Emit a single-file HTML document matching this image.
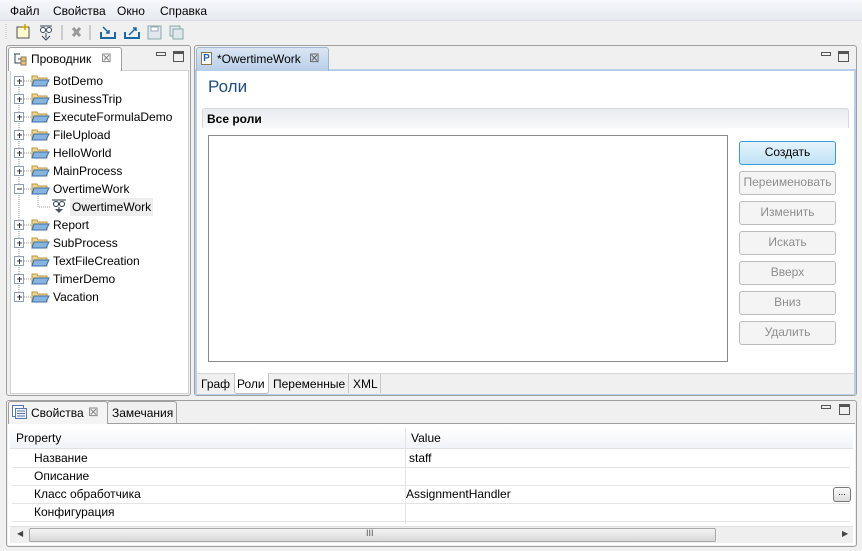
<!DOCTYPE html>
<html><head><meta charset="utf-8"><style>
*{margin:0;padding:0;box-sizing:border-box}
body{width:862px;height:551px;background:#f0f0f0;font:12px "Liberation Sans","DejaVu Sans",sans-serif;color:#000;position:relative;overflow:hidden}
.a{position:absolute}
.menu{left:0;top:0;width:862px;height:21px;background:linear-gradient(#f6f8fb,#e6eaf0);border-bottom:1px solid #d8dde5}
.menu span{position:absolute;top:4px}
.tb{top:22px;left:0;width:862px;height:20px}
.panel{background:#fff;border:1px solid #a0a0a0;border-radius:3px}
.tab{background:#f0f0f0;border:1px solid #a0a0a0;border-bottom:none;height:24px;border-radius:3px 3px 0 0}
.row{position:absolute;left:0;height:18px;line-height:18px;white-space:nowrap}
.btn{position:absolute;left:739px;width:97px;height:24px;border:1px solid #bcbcbc;border-radius:3px;background:#f4f4f4;color:#8d8d8d;text-align:center;line-height:21px}
.mm{position:absolute;width:10px;height:4px;border:1px solid #555}
.mx{position:absolute;width:11px;height:11px;border:1px solid #555;border-top-width:3px}
.prow{position:absolute;left:12px;width:838px;height:18px;border-bottom:1px solid #e4e4e4;line-height:17px}
</style></head><body>
<div class="a menu"><span style="left:10px">Файл</span><span style="left:53px">Свойства</span><span style="left:117px">Окно</span><span style="left:160px">Справка</span></div>
<div class="a tb">
<svg width="200" height="20" style="position:absolute;left:0;top:0">
<g stroke="#bbb"><line x1="6" y1="2" x2="6" y2="18" stroke-dasharray="1,1"/></g>
<rect x="17" y="5" width="12" height="11" fill="#fff8d0" stroke="#555"/><path d="M25 2v6M22 5h6" stroke="#c8a000" stroke-width="1.5"/>
<circle cx="43" cy="8" r="2.5" fill="#fff" stroke="#345"/><circle cx="49" cy="8" r="2.5" fill="#fff" stroke="#345"/><path d="M40 4h12M46 11v5M42 14l4 4 4-4" stroke="#345" fill="none"/>
<line x1="62" y1="3" x2="62" y2="18" stroke="#aaa"/>
<path d="M73 6l7 8M80 6l-7 8" stroke="#999" stroke-width="3"/>
<line x1="90" y1="3" x2="90" y2="18" stroke="#aaa"/>
<path d="M101 10v6h14v-6" stroke="#1a6aa8" stroke-width="2" fill="none"/><path d="M103 5l6 6M109 8v3h-3" stroke="#1a6aa8" stroke-width="1.5" fill="none"/>
<path d="M125 10v6h14v-6" stroke="#1a6aa8" stroke-width="2" fill="none"/><path d="M129 13l7-7M136 9v-3h-3" stroke="#1a6aa8" stroke-width="1.5" fill="none"/>
<rect x="148" y="4" width="13" height="13" fill="#dfe7ef" stroke="#8aa"/><rect x="151" y="5" width="7" height="4" fill="#fff" stroke="#9ab"/>
<rect x="170" y="4" width="10" height="10" fill="#dfe7ef" stroke="#8aa"/><rect x="173" y="7" width="10" height="10" fill="#dfe7ef" stroke="#8aa"/>
</svg></div>

<div class="a panel" style="left:6px;top:45px;width:185px;height:351px;background:#f0f0f0"></div>
<div class="a" style="left:10px;top:70px;width:179px;height:324px;background:#fff;border:1px solid #d0d0d0"></div>
<div class="a tab" style="left:8px;top:47px;width:114px;background:#fff"></div>
<svg class="a" style="left:13px;top:52px" width="16" height="14"><path d="M1 2h6M2 2v9h5M5 7h3M5 11h3" stroke="#345" fill="none"/><rect x="8" y="5" width="5" height="4" fill="#e9c46a" stroke="#876"/><rect x="8" y="9" width="5" height="4" fill="#e9c46a" stroke="#876"/></svg>
<div class="a" style="left:31px;top:52px">Проводник</div>
<div class="a" style="left:101px;top:50px;color:#888;font-size:13px">⊠</div>
<div class="mm" style="left:156px;top:52px"></div><div class="mx" style="left:173px;top:51px"></div>

<div class="row" style="top:72px;left:53px">BotDemo</div>
<div class="row" style="top:90px;left:53px">BusinessTrip</div>
<div class="row" style="top:108px;left:53px">ExecuteFormulaDemo</div>
<div class="row" style="top:126px;left:53px">FileUpload</div>
<div class="row" style="top:144px;left:53px">HelloWorld</div>
<div class="row" style="top:162px;left:53px">MainProcess</div>
<div class="row" style="top:180px;left:53px">OvertimeWork</div>
<div class="row" style="top:198px;left:70px;background:#eee;padding:0 2px">OwertimeWork</div>
<div class="row" style="top:216px;left:53px">Report</div>
<div class="row" style="top:234px;left:53px">SubProcess</div>
<div class="row" style="top:252px;left:53px">TextFileCreation</div>
<div class="row" style="top:270px;left:53px">TimerDemo</div>
<div class="row" style="top:288px;left:53px">Vacation</div>
<svg class="a" style="left:14px;top:72px" width="40" height="234">
<path d="M5 9V225" stroke="#999" stroke-dasharray="1,1" fill="none"/>
<g stroke="#999" stroke-dasharray="1,1" fill="none">
<path d="M10 9h8M10 27h8M10 45h8M10 63h8M10 81h8M10 99h8M10 117h8M10 153h8M10 171h8M10 189h8M10 207h8M10 225h8"/>
<path d="M24 122v13h13"/>
</g>
<g fill="#fff" stroke="#8f9fb8">
<rect x="0.5" y="4.5" width="9" height="9"/><rect x="0.5" y="22.5" width="9" height="9"/><rect x="0.5" y="40.5" width="9" height="9"/><rect x="0.5" y="58.5" width="9" height="9"/><rect x="0.5" y="76.5" width="9" height="9"/><rect x="0.5" y="94.5" width="9" height="9"/><rect x="0.5" y="112.5" width="9" height="9"/><rect x="0.5" y="148.5" width="9" height="9"/><rect x="0.5" y="166.5" width="9" height="9"/><rect x="0.5" y="184.5" width="9" height="9"/><rect x="0.5" y="202.5" width="9" height="9"/><rect x="0.5" y="220.5" width="9" height="9"/>
</g>
<g stroke="#333"><path d="M3 9h5M3 27h5M3 45h5M3 63h5M3 81h5M3 99h5M3 117h5M3 153h5M3 171h5M3 189h5M3 207h5M3 225h5"/>
<path d="M5.5 7v5M5.5 25v5M5.5 43v5M5.5 61v5M5.5 79v5M5.5 97v5M5.5 151v5M5.5 169v5M5.5 187v5M5.5 205v5M5.5 223v5"/></g>
<g fill="#f2d68a" stroke="#b8964a">
<path d="M18 4h5l1 2h9v8h-15z"/><path d="M18 22h5l1 2h9v8h-15z"/><path d="M18 40h5l1 2h9v8h-15z"/><path d="M18 58h5l1 2h9v8h-15z"/><path d="M18 76h5l1 2h9v8h-15z"/><path d="M18 94h5l1 2h9v8h-15z"/><path d="M18 112h5l1 2h9v8h-15z"/><path d="M18 148h5l1 2h9v8h-15z"/><path d="M18 166h5l1 2h9v8h-15z"/><path d="M18 184h5l1 2h9v8h-15z"/><path d="M18 202h5l1 2h9v8h-15z"/><path d="M18 220h5l1 2h9v8h-15z"/>
</g>
<g fill="#8ab4e0" stroke="#3b6ea8">
<path d="M20 8h15l-3 6h-14z"/><path d="M20 26h15l-3 6h-14z"/><path d="M20 44h15l-3 6h-14z"/><path d="M20 62h15l-3 6h-14z"/><path d="M20 80h15l-3 6h-14z"/><path d="M20 98h15l-3 6h-14z"/><path d="M20 116h15l-3 6h-14z"/><path d="M20 152h15l-3 6h-14z"/><path d="M20 170h15l-3 6h-14z"/><path d="M20 188h15l-3 6h-14z"/><path d="M20 206h15l-3 6h-14z"/><path d="M20 224h15l-3 6h-14z"/>
</g>
</svg>
<svg class="a" style="left:51px;top:198px" width="16" height="16"><circle cx="5" cy="6" r="2.5" fill="#fff" stroke="#234"/><circle cx="11" cy="6" r="2.5" fill="#fff" stroke="#234"/><path d="M1 2h14M8 9v3" stroke="#234"/><path d="M4 11l4 4 4-4z" fill="#456"/></svg>

<div class="a" style="left:194px;top:45px;width:663px;height:351px;border:1px solid #a0a0a0;border-radius:3px;background:#f0f0f0"></div>
<div class="a" style="left:195px;top:69px;width:661px;height:326px;border:2px solid #b7cfe8;background:#fff"></div>
<div class="a tab" style="left:196px;top:47px;width:133px;height:24px;background:linear-gradient(#dbe6f3,#b8cfe8);border-color:#9fb6d0"></div>
<div class="a" style="left:201px;top:52px;width:11px;height:13px;border:1px solid #8a7a50;background:#fff;color:#2060b0;font-size:10px;font-weight:bold;line-height:11px;text-align:center">P</div>
<div class="a" style="left:217px;top:52px">*OwertimeWork</div>
<div class="a" style="left:309px;top:50px;color:#666;font-size:13px">⊠</div>
<div class="mm" style="left:821px;top:52px"></div><div class="mx" style="left:838px;top:51px"></div>
<div class="a" style="left:208px;top:77px;font-size:17px;color:#1f4e79">Роли</div>
<div class="a" style="left:202px;top:108px;width:647px;height:20px;border:1px solid #d4d8dc;border-bottom:none;border-radius:3px 3px 0 0;background:linear-gradient(#e8ebee,#f8f9fa);font-weight:bold;padding:3px 0 0 4px">Все роли</div>
<div class="a" style="left:208px;top:135px;width:520px;height:227px;border:1px solid #8a8a8a;background:#fff"></div>
<div class="btn" style="top:141px;border-color:#3c9ad8;background:linear-gradient(#e6f4fc,#bfe2f6);color:#000">Создать</div>
<div class="btn" style="top:171px">Переименовать</div>
<div class="btn" style="top:201px">Изменить</div>
<div class="btn" style="top:231px">Искать</div>
<div class="btn" style="top:261px">Вверх</div>
<div class="btn" style="top:291px">Вниз</div>
<div class="btn" style="top:321px">Удалить</div>
<div class="a" style="left:197px;top:373px;width:657px;height:21px;background:#f0f0f0;border-top:1px solid #d8d8d8"></div>
<div class="a" style="left:197px;top:374px;width:184px;height:19px;border-right:1px solid #c8c8c8"></div>
<div class="a" style="left:201px;top:377px">Граф</div>
<div class="a" style="left:234px;top:373px;width:35px;height:21px;background:#fff;border:1px solid #c0c0c0;border-top:none;border-radius:0 0 3px 3px"></div>
<div class="a" style="left:237px;top:377px">Роли</div>
<div class="a" style="left:269px;top:374px;width:80px;height:19px;border-right:1px solid #c8c8c8"></div>
<div class="a" style="left:273px;top:377px">Переменные</div>
<div class="a" style="left:353px;top:377px">XML</div>

<div class="a" style="left:6px;top:400px;width:851px;height:147px;border:1px solid #a0a0a0;border-radius:3px;background:#f0f0f0"></div>
<div class="a" style="left:8px;top:423px;width:847px;height:122px;background:#fff;border-top:1px solid #a0a0a0"></div>
<div class="a tab" style="left:8px;top:401px;width:100px;height:23px;background:#f4f4f4"></div>
<div class="a tab" style="left:107px;top:401px;width:70px;height:22px"></div>
<svg class="a" style="left:12px;top:405px" width="16" height="14"><rect x="0.5" y="0.5" width="11" height="11" fill="#fff" stroke="#5577aa"/><rect x="3.5" y="3.5" width="11" height="10" fill="#eef3fa" stroke="#5577aa"/><path d="M5 6h8M5 8.5h8M5 11h8" stroke="#5577aa"/></svg>
<div class="a" style="left:31px;top:406px">Свойства</div>
<div class="a" style="left:88px;top:404px;color:#888;font-size:13px">⊠</div>
<div class="a" style="left:112px;top:406px">Замечания</div>
<div class="mm" style="left:821px;top:405px"></div><div class="mx" style="left:839px;top:404px"></div>
<div class="a" style="left:10px;top:428px;width:843px;height:21px;background:linear-gradient(#fff,#f0f3f7);border-bottom:1px solid #e0e0e0"></div>
<div class="a" style="left:16px;top:431px">Property</div>
<div class="a" style="left:405px;top:428px;width:1px;height:96px;background:#e4e4e4"></div>
<div class="a" style="left:411px;top:431px">Value</div>
<div class="prow" style="top:450px"><span class="a" style="left:22px">Название</span><span class="a" style="left:397px">staff</span></div>
<div class="prow" style="top:468px"><span class="a" style="left:22px">Описание</span></div>
<div class="prow" style="top:486px"><span class="a" style="left:22px">Класс обработчика</span><span class="a" style="left:394px">AssignmentHandler</span></div>
<div class="prow" style="top:504px"><span class="a" style="left:22px">Конфигурация</span></div>
<div class="a" style="left:833px;top:487px;width:18px;height:15px;border:1px solid #777;border-radius:3px;background:linear-gradient(#fafafa,#ddd);font-size:9px;line-height:9px;text-align:center">...</div>
<div class="a" style="left:10px;top:526px;width:843px;height:17px;background:#efefef;border-top:1px solid #e0e0e0"></div>
<div class="a" style="left:17px;top:529px;font-size:8px;color:#444">◀</div>
<div class="a" style="left:29px;top:528px;width:687px;height:14px;border:1px solid #a8a8a8;border-radius:2px;background:linear-gradient(#f4f4f4,#d8d8d8)"></div>
<div class="a" style="left:366px;top:528px;font-size:9px;color:#555">III</div>
<div class="a" style="left:842px;top:529px;font-size:8px;color:#444">▶</div>
</body></html>
